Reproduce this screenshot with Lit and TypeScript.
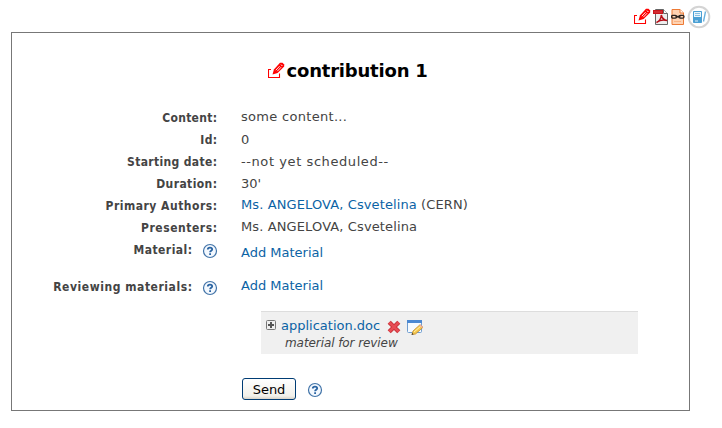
import { LitElement, html, css, svg } from "lit";
import { customElement, property } from "lit/decorators.js";

const icons: Record<string, unknown> = {
  pencil: svg`<svg width="17" height="17" viewBox="0 0 17 17" fill="none">
    <path d="M3 7.500H.5v8h11v-4" stroke="#f00" stroke-width="1.100"/>
    <path d="M4.500 12.500l1.400-5L12 .8h2.500L16.200 2.500v2L9.600 11z" fill="#f00"/>
    <path d="M7.800 8.200l3.800-4M9.300 9.200l3.800-4" stroke="#fff" stroke-width=".9"/>
    <path d="M13 2.600l1.400 1.400" stroke="#fff"/></svg>`,
  pdf: svg`<svg width="16" height="16" viewBox="0 0 16 16" fill="none">
    <path d="M2.500.5h8l4 4v11h-12z" fill="#eee" stroke="#666"/>
    <path d="M10.500.5v4h4" fill="#fff" stroke="#666"/>
    <rect x="0" y="1" width="10" height="4" fill="#c8141c"/>
    <path d="M1 3h8" stroke="#e25a5a" stroke-width=".7"/>
    <path d="M3.500 13.500c2.500-1 4.700-4.300 4.800-7.500.7 3.200 2.700 5 5.700 5.600-3-1-7.500-.2-10.500 1.900z" stroke="#b60c16" stroke-width="1.500"/></svg>`,
  xml: svg`<svg width="14" height="16" viewBox="0 0 14 16" fill="none">
    <path d="M1 .5h8L12.500 4v11.500H1z" fill="#ffd3b3" stroke="#ed7a35"/>
    <path d="M9 .5V4h3.500" fill="#fff" stroke="#ed7a35"/>
    <path d="M3 12.500h7" stroke="#f9b384"/>
    <rect x=".6" y="6.300" width="5" height="2.800" rx="1.300" stroke="#2c2420" stroke-width="1.300"/>
    <rect x="8" y="6.300" width="5" height="2.800" rx="1.300" stroke="#2c2420" stroke-width="1.300"/>
    <path d="M4.500 7.700h5" stroke="#2c2420" stroke-width="1.800"/></svg>`,
  book: svg`<svg width="24" height="24" viewBox="0 0 24 24" fill="none">
    <circle cx="12" cy="12" r="10.300" fill="#fff" stroke="#d4d4d4" stroke-width="2"/>
    <rect x="6" y="6" width="9" height="12" rx=".8" fill="#4ba0d4"/>
    <path d="M7 7h7v5H7z" fill="#eaf5fb"/>
    <path d="M8 8.500h5M8 10.500h5" stroke="#86bfe2"/>
    <path d="M8 16h3" stroke="#e2f1fa"/>
    <path d="M18.500 6.500l-2 10" stroke="#65aeda" stroke-width="1.300"/></svg>`,
  help: svg`<svg width="16" height="16" viewBox="0 0 16 16" fill="none">
    <circle cx="8" cy="8" r="6.500" fill="#f3f8fe" stroke="#4173a8" stroke-width="1.200"/>
    <path d="M5.800 6.500c0-2.600 4.400-2.500 4.400-.2 0 1.500-2.100 1.400-2.100 3" stroke="#2a64a2" stroke-width="1.800"/>
    <path d="M7.200 10.300H9V12H7.200z" fill="#2a64a2"/></svg>`,
  plus: svg`<svg width="10" height="10" viewBox="0 0 10 10" fill="none">
    <rect x=".5" y=".5" width="9" height="9" rx="1" fill="#eee" stroke="#777"/>
    <path d="M2 5h6M5 2v6" stroke="#555" stroke-width="2"/></svg>`,
  remove: svg`<svg width="14" height="14" viewBox="0 0 14 14" fill="none">
    <path d="M2.200 2.200l9.600 9.600M11.800 2.200l-9.600 9.600" stroke="#c9343b" stroke-width="4.400"/>
    <path d="M2.300 2.300l9.400 9.400M11.700 2.300l-9.400 9.400" stroke="#e84c54" stroke-width="2.400"/></svg>`,
  edit: svg`<svg width="17" height="16" viewBox="0 0 17 16" fill="none">
    <rect x=".5" y=".5" width="14" height="12" rx="1" fill="#f5faff" stroke="#6f9dd0"/>
    <path d="M0 1.500h15" stroke="#4a88d2" stroke-width="3"/>
    <path d="M5 14.500l1-3.500 7-6.300 3 2.600L8.500 14z" fill="#f6c84d" stroke="#c08c30" stroke-width=".8"/>
    <path d="M7 12l7-6" stroke="#fff0a8"/>
    <path d="M12.500 5.400l.9-.8 2.600 2.400-1 .9z" fill="#edaaa0"/>
    <path d="M4.500 15l.8-2 1.300 1.300z" fill="#333"/></svg>`,
};

@customElement("ui-icon")
class UiIcon extends LitElement {
  @property() name = "help";
  static styles = css`
    :host { display: block; flex: none; }
    svg { display: block; }
  `;
  render() { return icons[this.name]; }
}

@customElement("app-root")
class AppRoot extends LitElement {
  static styles = css`
    :host { display: flex; flex-direction: column; width: 722px; height: 428px; background: #fff; color: #444;
      font: 13px/22px Verdana, "DejaVu Sans", sans-serif; white-space: nowrap; }
    .tools { display: flex; height: 32px; padding-left: 634px; box-sizing: border-box; }
    .t1 { margin-top: 8px; }
    .t2 { margin: 9px 0 0 2px; }
    .t3 { margin: 9px 0 0 2px; }
    .t4 { margin: 5px 0 0 2px; }
    .panel { box-sizing: border-box; width: 679px; height: 379px; margin-left: 11px; border: 1px solid #777; }
    h1 { display: flex; margin: 25px 0 0 256px; height: 26px; color: #000; font-size: 18px; line-height: 26px; font-weight: bold;
      letter-spacing: -0.2px; }
    .title-icon { margin: 4px 1.5px 0 0; }
    .rows { margin-top: 22px; }
    .row { display: flex; height: 22px; }
    .label { display: flex; justify-content: flex-end; width: 205px; margin-right: 24px; padding-top: 1px; font-weight: bold; font-size: 12px;
      font-family: Tahoma, "DejaVu Sans Condensed", "DejaVu Sans", sans-serif; }
    .label ui-icon { margin: 3px -1px 0 10px; }
    .lower .value { padding-top: 1px; }
    .material { height: 37px; padding-top: 1px; box-sizing: border-box; }
    .material .label { padding-top: 0; }
    .material .label ui-icon { margin-top: 4px; }
    .material .value { padding-top: 3px; }
    .review { height: 37px; }
    .review .label ui-icon { margin-top: 4px; }
    a { color: #0b63a5; text-decoration: none; }
    .file { box-sizing: border-box; width: 377px; height: 43px; margin: -1px 0 0 249px; padding: 3px 0 0 5px;
      background: #f0f0f0; border-top: 1px solid #ddd; }
    .name { display: flex; height: 21px; }
    .name a { margin: 0 7px 0 5px; }
    .plus { margin-top: 5px; }
    .remove { margin: 5px 6px 0 0; }
    .edit { margin-top: 5px; }
    .note { margin-left: 19px; font-size: 12px; line-height: 14px; font-style: italic; letter-spacing: -0.08px; }
    .actions { display: flex; margin: 24px 0 0 230px; }
    button { box-sizing: border-box; width: 54px; height: 22px; padding: 1px 0 0; border: 1px solid #003c74; border-radius: 3px;
      background: linear-gradient(#fff, #f1f0ea 85%, #d9d3c8); color: #000; font: 13px/19px Tahoma, "DejaVu Sans", sans-serif; }
    .actions ui-icon { margin: 4px 0 0 11px; }
  `;

  row(label: string, value: unknown, labelTracking: number, valueTracking = 0, kind = "") {
    const help = kind === "material" || kind === "review";
    return html`<div class="row ${kind}">
      <div class="label"><span style="letter-spacing:${labelTracking}px;margin-right:${-labelTracking}px">${label}</span>${help ? html`<ui-icon name="help"></ui-icon>` : ""}</div>
      <div class="value" style="letter-spacing:${valueTracking}px">${value}</div>
    </div>`;
  }

  render() {
    return html`
      <div class="tools">
        <ui-icon class="t1" name="pencil"></ui-icon><ui-icon class="t2" name="pdf"></ui-icon>
        <ui-icon class="t3" name="xml"></ui-icon><ui-icon class="t4" name="book"></ui-icon>
      </div>
      <div class="panel">
        <h1><ui-icon class="title-icon" name="pencil"></ui-icon><span>contribution 1</span></h1>
        <div class="rows">
          ${this.row("Content:", "some content...", 0.3, 0.3)}
          ${this.row("Id:", "0", 0.3, 0, "lower")}
          ${this.row("Starting date:", "--not yet scheduled--", 0.35, 0.58, "lower")}
          ${this.row("Duration:", "30'", 0.4, 0, "lower")}
          ${this.row("Primary Authors:", html`<a>Ms. ANGELOVA, Csvetelina</a> (CERN)`, 0.5, 0.11)}
          ${this.row("Presenters:", "Ms. ANGELOVA, Csvetelina", 0.55, 0.12)}
          ${this.row("Material:", html`<a>Add Material</a>`, 0.45, 0, "material")}
          ${this.row("Reviewing materials:", html`<a>Add Material</a>`, 0.55, 0, "review")}
        </div>
        <div class="file">
          <div class="name"><ui-icon class="plus" name="plus"></ui-icon><a>application.doc</a>
            <ui-icon class="remove" name="remove"></ui-icon><ui-icon class="edit" name="edit"></ui-icon></div>
          <div class="note">material for review</div>
        </div>
        <div class="actions"><button>Send</button><ui-icon name="help"></ui-icon></div>
      </div>`;
  }
}
